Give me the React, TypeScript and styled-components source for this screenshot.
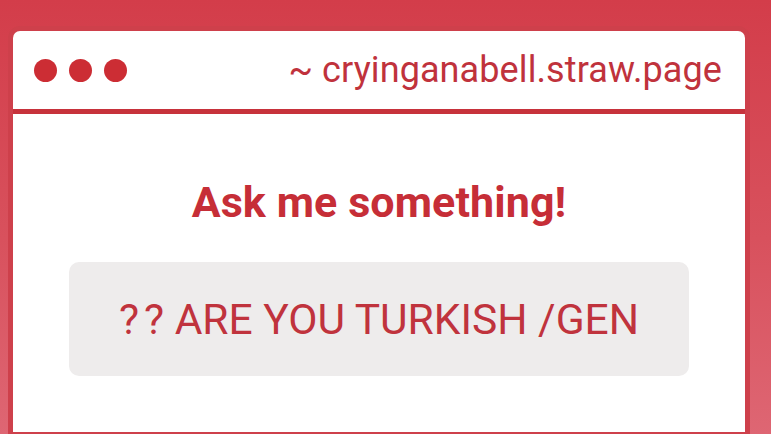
import React from 'react'
import styled, { createGlobalStyle } from 'styled-components'

const GlobalStyle = createGlobalStyle`
  html, body {
    margin: 0;
    height: 100%;
    overflow: hidden;
  }

  body {
    font-family: Roboto, 'Liberation Sans', sans-serif;
    background: linear-gradient(180deg, #d33d4a 0%, #d8515d 55%, #de6673 100%);
  }
`

const Page = styled.div`
  padding: 31px 26px 0 13px;
`

const Window = styled.div`
  background: #fff;
  border-radius: 7px 7px 0 0;
  box-shadow: 0 0 0 5px #ce404b;
  height: 401px;
  overflow: hidden;
`

const TitleBar = styled.div`
  display: flex;
  align-items: center;
  justify-content: space-between;
  height: 78px;
  padding: 0 23px 0 21px;
  border-bottom: 5px solid #c7323b;
`

const Dots = styled.div`
  display: flex;
  gap: 12px;
`

const Dot = styled.span`
  width: 23px;
  height: 23px;
  border-radius: 50%;
  background: #cc2d34;
`

const Address = styled.div`
  font-size: 36px;
  letter-spacing: 0.1px;
  color: #c0323c;
  line-height: 40px;
`

const Body = styled.div`
  display: flex;
  flex-direction: column;
  align-items: center;
  padding: 63px 56px 0;
`

const Heading = styled.h1`
  margin: 0;
  font-size: 43px;
  font-weight: 700;
  letter-spacing: 0.1px;
  color: #c62e37;
  line-height: 50px;
`

const Question = styled.div`
  margin-top: 35px;
  align-self: stretch;
  height: 114px;
  border-radius: 10px;
  background: #eeecec;
  display: flex;
  align-items: center;
  justify-content: center;
  font-size: 42.5px;
  color: #c0333d;
`

const Mark = styled.span`
  letter-spacing: 5px;
`

export default function App() {
  return (
    <>
      <GlobalStyle />
      <Page>
        <Window>
          <TitleBar>
            <Dots>
              <Dot />
              <Dot />
              <Dot />
            </Dots>
            <Address>~ cryinganabell.straw.page</Address>
          </TitleBar>
          <Body>
            <Heading>Ask me something!</Heading>
            <Question>
              <Mark>?</Mark>? ARE YOU TURKISH /GEN
            </Question>
          </Body>
        </Window>
      </Page>
    </>
  )
}
